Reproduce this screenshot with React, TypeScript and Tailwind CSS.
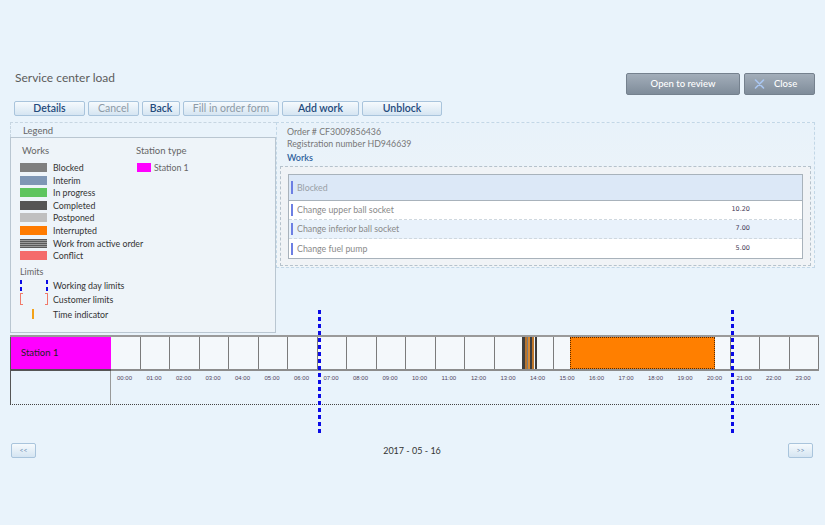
import React from "react";

const HOURS = Array.from({ length: 24 }, (_, i) => `${String(i).padStart(2, "0")}:00`);

const WORKS = [
  { label: "Blocked", swatch: "bg-[#7f7f7f]" },
  { label: "Interim", swatch: "bg-[#7f97b5]" },
  { label: "In progress", swatch: "bg-[#5fc55f]" },
  { label: "Completed", swatch: "bg-[#555555]" },
  { label: "Postponed", swatch: "bg-[#c0c0c0]" },
  { label: "Interrupted", swatch: "bg-[#ff7b00]" },
  {
    label: "Work from active order",
    swatch:
      "bg-[repeating-linear-gradient(to_bottom,#5a5a5a_0_1px,#9a9a9a_1px_2px)]",
  },
  { label: "Conflict", swatch: "bg-[#f46b6b]" },
];

const ORDER_ROWS = [
  { name: "Change upper ball socket", value: "10.20", bg: "bg-white" },
  { name: "Change inferior ball socket", value: "7.00", bg: "bg-[#e9f2fb]" },
  { name: "Change fuel pump", value: "5.00", bg: "bg-white" },
];

const dashV = "bg-[repeating-linear-gradient(to_bottom,#0a0ae6_0_4px,transparent_4px_7px)]";

const ToolButton = ({ label, width, disabled }: { label: string; width: string; disabled?: boolean }) => (
  <button
    className={`${width} h-[15px] rounded-[2px] border border-[#a9c4dc] bg-gradient-to-b from-[#f6fafd] to-[#d5e5f2] text-[10.5px] leading-[13px] ${
      disabled ? "text-[#8d9aa6]" : "font-semibold text-[#234a7c]"
    }`}
  >
    {label}
  </button>
);

const App = () => {
  return (
    <div className="relative h-[525px] w-[825px] overflow-hidden bg-[#e9f3fb] font-['Lato',sans-serif] text-[#333]">
      {/* header */}
      <div className="flex items-start justify-between pl-[15px] pr-[10px] pt-[68px]">
        <div className="text-[12px] leading-[20px] text-[#5c5c5c]">Service center load</div>
        <div className="mt-[5px] flex gap-[4px]">
          <button className="h-[22px] w-[114px] rounded-[2px] border border-[#75818e] bg-gradient-to-b from-[#a3aeba] to-[#7f8c9a] text-[9.5px] font-medium text-white">
            Open to review
          </button>
          <button className="flex h-[22px] w-[71px] items-center rounded-[2px] border border-[#75818e] bg-gradient-to-b from-[#a3aeba] to-[#7f8c9a] pl-[9px] text-[9.5px] font-medium text-white">
            <svg width="11" height="10" viewBox="0 0 11 10" className="mr-[9px]">
              <path d="M1.5 1 L9.5 9 M9.5 1 L1.5 9" stroke="#a9c6f0" strokeWidth="1.6" strokeLinecap="round" />
            </svg>
            Close
          </button>
        </div>
      </div>

      {/* toolbar */}
      <div className="mt-[6px] flex gap-[3px] pl-[14px]">
        <ToolButton label="Details" width="w-[71px]" />
        <ToolButton label="Cancel" width="w-[51px]" disabled />
        <ToolButton label="Back" width="w-[38px]" />
        <ToolButton label="Fill in order form" width="w-[96px]" disabled />
        <ToolButton label="Add work" width="w-[77px]" />
        <ToolButton label="Unblock" width="w-[80px]" />
      </div>

      {/* main */}
      <div className="mt-[6px] flex h-[211px] pl-[10px]">
        {/* legend */}
        <div className="flex w-[266px] flex-col">
          <div className="h-[15px] border-l border-t border-dashed border-[#c7d6e2] pl-[12px] text-[9.5px] leading-[15px] text-[#666]">
            Legend
          </div>
          <div className="flex flex-1 border border-[#b9c6d1] bg-[#eef4f9] pl-[9px] pt-[6px] text-[8.8px] text-[#333]">
            <div className="w-[116px] whitespace-nowrap">
              <div className="pl-[2px] text-[9.5px] leading-[14px] text-[#666]">Works</div>
              <div className="mt-[5px] flex flex-col gap-[3.6px]">
                {WORKS.map((w) => (
                  <div key={w.label} className="flex h-[9px] items-center">
                    <span className={`h-[9px] w-[27px] shrink-0 ${w.swatch}`} />
                    <span className="ml-[6px] leading-[9px]">{w.label}</span>
                  </div>
                ))}
              </div>
              <div className="mt-[6px] text-[9px] leading-[12px] text-[#666]">Limits</div>
              <div className="mt-[1px] flex h-[13px] items-center">
                <div className="relative h-[12px] w-[29px]">
                  <span className={`absolute left-0 top-0 h-[12px] w-[2px] ${dashV}`} />
                  <span className={`absolute left-[26px] top-0 h-[12px] w-[2px] ${dashV}`} />
                </div>
                <span className="ml-[4px]">Working day limits</span>
              </div>
              <div className="mt-[0px] flex h-[14px] items-center">
                <div className="relative h-[12px] w-[29px]">
                  <span className="absolute left-0 top-0 h-[12px] w-[3px] border-y border-l border-[#f07a6a]" />
                  <span className="absolute left-[25px] top-0 h-[12px] w-[3px] border-y border-r border-[#f07a6a]" />
                </div>
                <span className="ml-[4px]">Customer limits</span>
              </div>
              <div className="mt-[1px] flex h-[14px] items-center">
                <div className="relative h-[12px] w-[29px]">
                  <span className="absolute left-[12px] top-[1px] h-[10px] w-[2px] bg-[#f3a21a]" />
                </div>
                <span className="ml-[4px]">Time indicator</span>
              </div>
            </div>
            <div>
              <div className="text-[9.5px] leading-[14px] text-[#666]">Station type</div>
              <div className="mt-[3px] flex items-center">
                <span className="ml-[1px] h-[9px] w-[14px] bg-[#ff00ff]" />
                <span className="ml-[3px] text-[#666]">Station 1</span>
              </div>
            </div>
          </div>
        </div>

        {/* order panel */}
        <div className="flex h-[146px] w-[539px] flex-col border border-dashed border-[#c2d7e7] bg-gradient-to-b from-[#e8f2fa] to-[#f1f5f8] px-[3px] pt-[3px]">
          <div className="pl-[7px] text-[8.8px] leading-[12px] text-[#777]">Order # CF3009856436</div>
          <div className="pl-[7px] text-[8.8px] leading-[12px] text-[#777]">Registration number HD946639</div>
          <div className="pl-[7px] pt-[2px] text-[9px] font-semibold leading-[12px] text-[#2e5f9c]">Works</div>
          <div className="mt-[2px] h-[100px] border border-dashed border-[#b5c2cc] bg-[#f0f3f6] px-[7px] pt-[7px]">
            <div className="border border-[#a8b2bb] text-[8.8px]">
              <div className="flex h-[26px] items-center border-b border-[#a8b2bb] bg-[#dce8f7] pl-[2px]">
                <span className="h-[13px] w-[2px] bg-[#6d7fe3]" />
                <span className="ml-[4px] text-[#9aa0a6]">Blocked</span>
              </div>
              {ORDER_ROWS.map((r, i) => (
                <div
                  key={r.name}
                  className={`flex h-[19px] items-center pl-[2px] ${r.bg} ${i < 2 ? "border-b border-dashed border-[#cfd8df]" : ""}`}
                >
                  <span className="h-[12px] w-[2px] bg-[#6d7fe3]" />
                  <span className="ml-[4px] text-[#8a8a8a]">{r.name}</span>
                  <span className="ml-auto mr-[52px] font-['DejaVu_Sans',sans-serif] text-[6.5px] text-[#3f3a55]">{r.value}</span>
                </div>
              ))}
            </div>
          </div>
        </div>
      </div>

      {/* timeline */}
      <div className="ml-[10px] mt-[2px] w-[809px]">
        <div className="flex h-[36px] border-t-2 border-[#9a9a9a]">
          <div className="flex w-[102px] items-center border-b-2 border-l border-[#555] bg-[#ff00ff] pl-[10px] text-[9.5px] text-[#222]">
            Station 1
          </div>
          <div className="relative flex flex-1 border-b-2 border-[#8c8c8c]">
            {HOURS.map((h) => (
              <div key={h} className="w-[29.5px] shrink-0 border-r border-[#7b7b7b] bg-[#f4f8fb]" />
            ))}
            <div className="absolute left-[411px] top-0 flex h-full w-[15px]">
              <span className="w-[3px] bg-[#3e3e3e]" />
              <span className="w-[2px] bg-[#b7742e]" />
              <span className="w-[1px] bg-[#7a7a7a]" />
              <span className="w-[2px] bg-[#d88a33]" />
              <span className="w-[2px] bg-[#3e3e3e]" />
              <span className="w-[2px] bg-[#c0782c]" />
              <span className="w-[1px] bg-[#e9f0f5]" />
              <span className="w-[2px] bg-[#3a3a3a]" />
            </div>
            <div className="absolute left-[459px] top-0 h-full w-[145px] border border-dotted border-[#5a2a00] bg-[#ff7f00]" />
          </div>
        </div>
        <div className="flex h-[34px] border-b border-dotted border-[#444]">
          <div className="w-[102px] border-l border-r border-l-[#555] border-r-[#999]" />
          <div className="flex flex-1">
            {HOURS.map((h) => (
              <div
                key={h}
                className="w-[29.5px] shrink-0 pl-[6px] pt-[3px] font-['Liberation_Sans',sans-serif] text-[6px] leading-[8px] text-[#4f4460]"
              >
                {h}
              </div>
            ))}
          </div>
        </div>
      </div>

      {/* working day limit markers */}
      <div className={`absolute left-[318px] top-[310px] h-[123px] w-[3px] ${dashV}`} />
      <div className={`absolute left-[731px] top-[310px] h-[123px] w-[3px] ${dashV}`} />

      {/* date navigation */}
      <div className="mt-[38px] flex items-center justify-between pl-[11px] pr-[12px]">
        <button className="h-[15px] w-[25px] rounded-[2px] border border-[#a9c4dc] bg-gradient-to-b from-[#f6fafd] to-[#d5e5f2] text-[7px] leading-[13px] text-[#6d8db0]">
          &lt;&lt;
        </button>
        <div className="text-[9px] text-[#333]">2017 - 05 - 16</div>
        <button className="h-[15px] w-[25px] rounded-[2px] border border-[#a9c4dc] bg-gradient-to-b from-[#f6fafd] to-[#d5e5f2] text-[7px] leading-[13px] text-[#6d8db0]">
          &gt;&gt;
        </button>
      </div>
    </div>
  );
};

export default App;
